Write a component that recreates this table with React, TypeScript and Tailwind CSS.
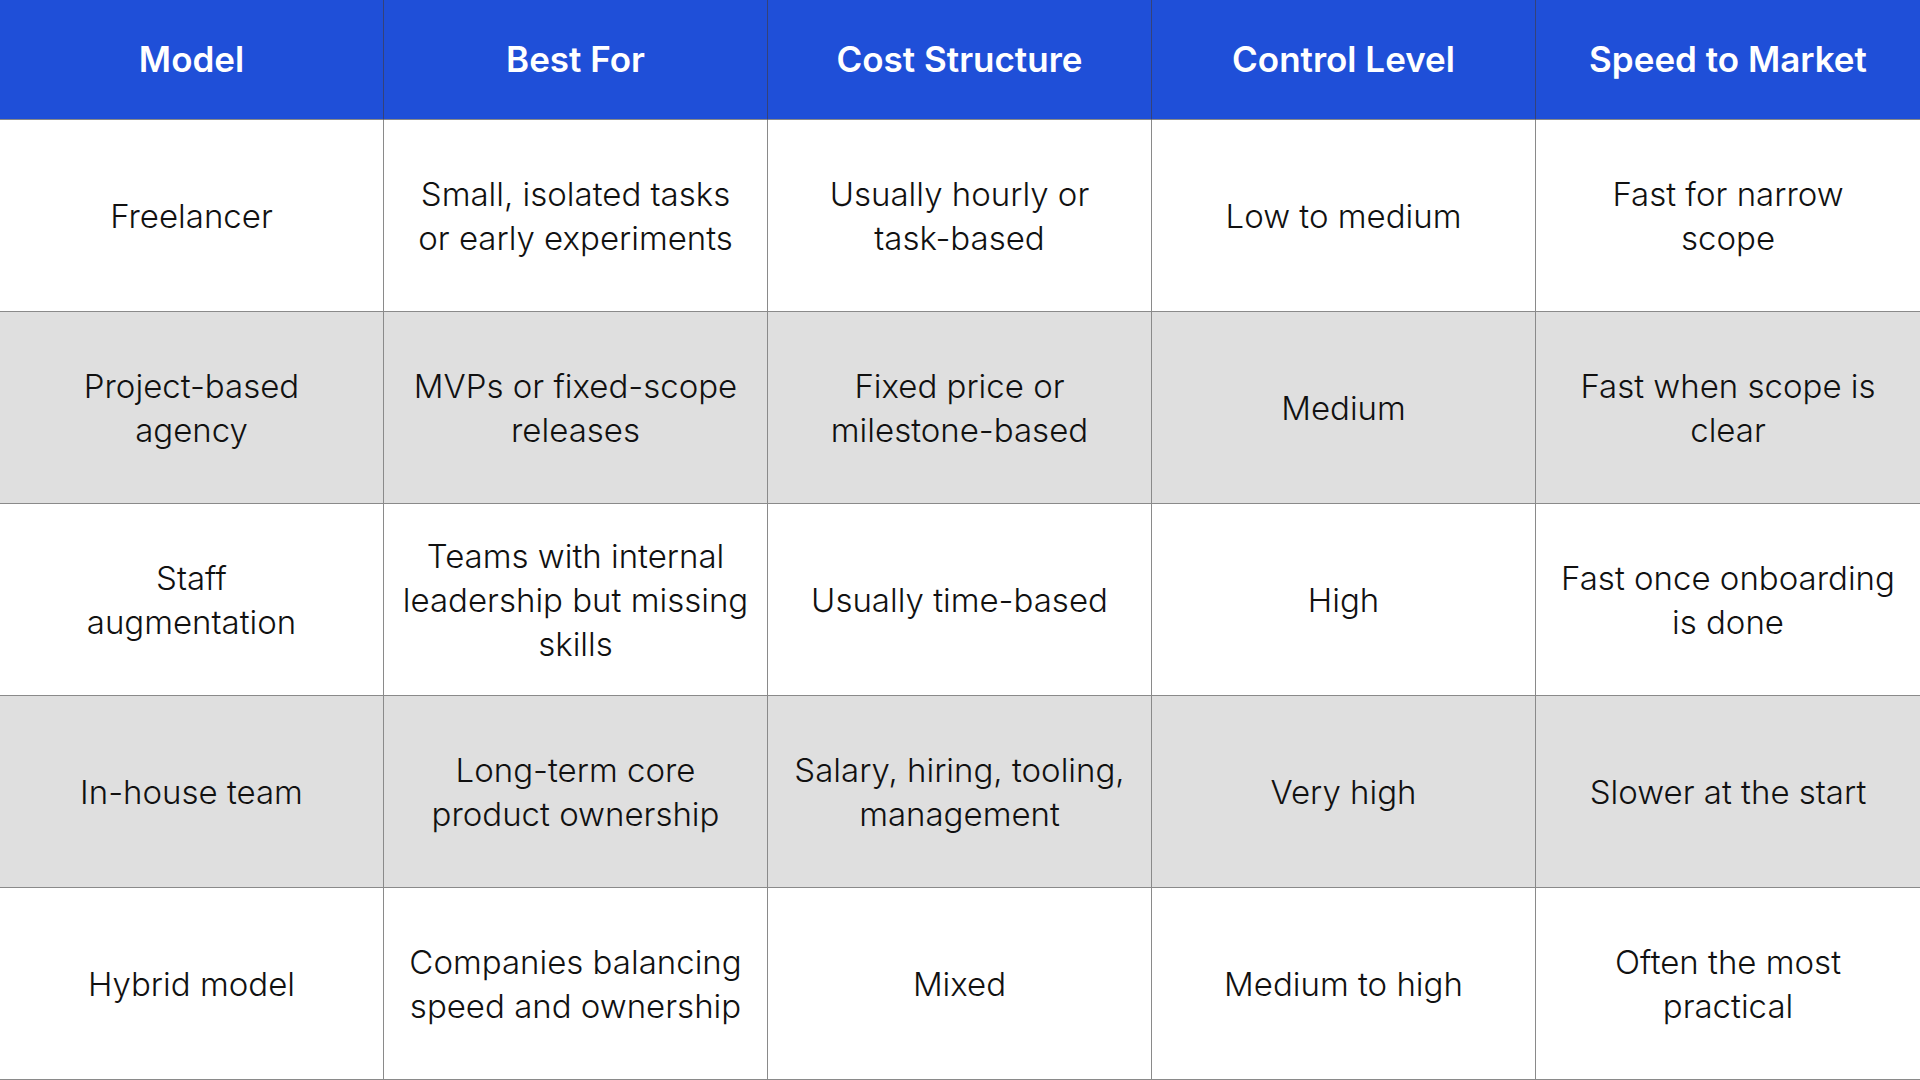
const headers = ["Model", "Best For", "Cost Structure", "Control Level", "Speed to Market"];

// line breaks follow the reference layout
const rows = [
  ["Freelancer", "Small, isolated tasks\nor early experiments", "Usually hourly or\ntask-based", "Low to medium", "Fast for narrow\nscope"],
  ["Project-based\nagency", "MVPs or fixed-scope\nreleases", "Fixed price or\nmilestone-based", "Medium", "Fast when scope is\nclear"],
  ["Staff\naugmentation", "Teams with internal\nleadership but missing\nskills", "Usually time-based", "High", "Fast once onboarding\nis done"],
  ["In-house team", "Long-term core\nproduct ownership", "Salary, hiring, tooling,\nmanagement", "Very high", "Slower at the start"],
  ["Hybrid model", "Companies balancing\nspeed and ownership", "Mixed", "Medium to high", "Often the most\npractical"],
];

export default function App() {
  return (
    <div className="w-[1920px] h-[1080px] overflow-hidden bg-white font-['Inter',sans-serif] text-[#111]">
      {/* header */}
      <div className="grid grid-cols-5 h-[120px] bg-[#1f4fd8] text-white">
        {headers.map((h, i) => (
          <div
            key={h}
            className={`flex items-center justify-center border-b border-[#888] text-[35px] font-semibold ${i < 4 ? "border-r border-r-[#34427a]" : ""}`}
          >
            {h}
          </div>
        ))}
      </div>

      {rows.map((row, r) => (
        <div key={r} className={`grid grid-cols-5 h-[192px] ${r % 2 === 1 ? "bg-[#dfdfdf]" : "bg-white"}`}>
          {row.map((cell, i) => (
            <div
              key={i}
              className={`flex items-center justify-center text-center whitespace-pre-line text-[33px] leading-[44px] font-light border-b border-[#8a8a8a] ${i < 4 ? "border-r" : ""}`}
            >
              {cell}
            </div>
          ))}
        </div>
      ))}
    </div>
  );
}
